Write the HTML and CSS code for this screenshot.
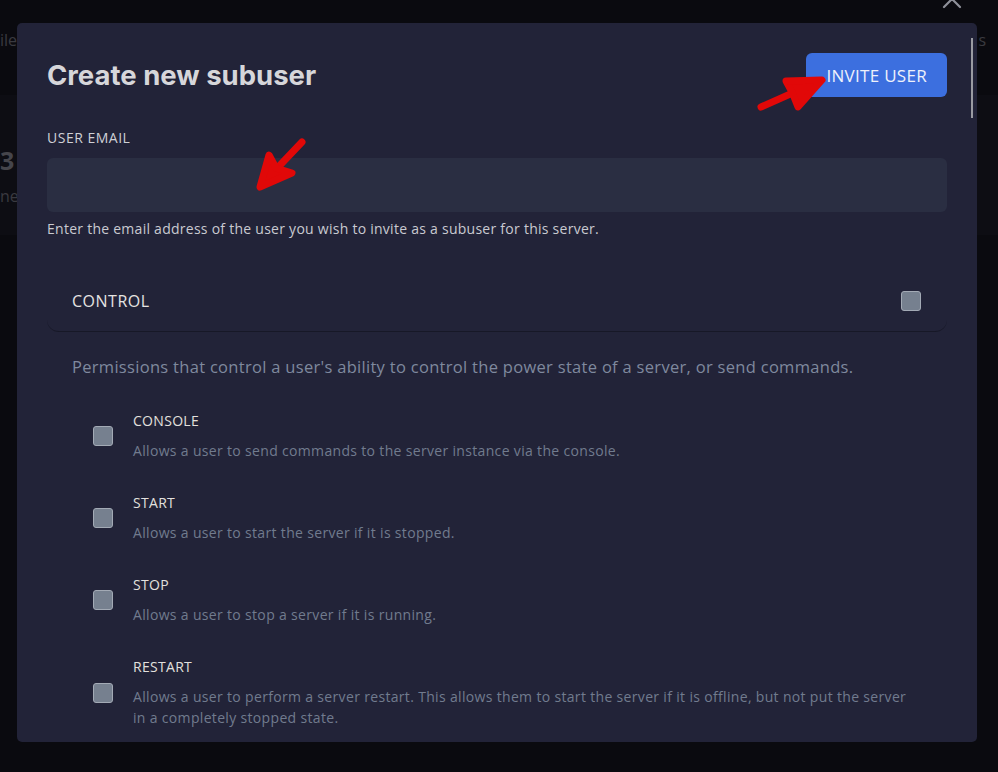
FILE: index.html
```html
<html>
  <head>
    <title>Create new subuser</title>
    <link rel="stylesheet" href="styles.css">
  </head>
  <body>
  <div class="page">
    <div class="page_top">
      <span>ile</span>
      <span>s</span>
    </div>
    <div class="page_card">
      <div class="page_big">3</div>
      <div class="page_small">ne</div>
    </div>
  </div>

  <div class="close_x">
    <svg width="22" height="22" viewBox="0 0 22 22"><path d="M3 3 L19 19 M19 3 L3 19" stroke="#8e9099" stroke-width="2.2" stroke-linecap="round" fill="none"/></svg>
  </div>

  <div class="modal">
    <div class="modal_inner">
      <div class="modal_head">
        <h2 class="title">Create new subuser</h2>
        <button class="invite_btn">INVITE USER</button>
      </div>

      <label class="field_label">USER EMAIL</label>
      <input type="text" class="field_input"/>
      <p class="field_help">Enter the email address of the user you wish to invite as a subuser for this server.</p>

      <div class="perm_group">
        <div class="perm_head">
          <span>CONTROL</span>
          <span class="check"></span>
        </div>
        <p class="perm_desc">Permissions that control a user's ability to control the power state of a server, or send commands.</p>

        <div class="perm_list">
          <div class="perm_item">
            <span class="check"></span>
            <div class="perm_text">
              <div class="perm_name">CONSOLE</div>
              <div class="perm_info">Allows a user to send commands to the server instance via the console.</div>
            </div>
          </div>
          <div class="perm_item">
            <span class="check"></span>
            <div class="perm_text">
              <div class="perm_name">START</div>
              <div class="perm_info">Allows a user to start the server if it is stopped.</div>
            </div>
          </div>
          <div class="perm_item">
            <span class="check"></span>
            <div class="perm_text">
              <div class="perm_name">STOP</div>
              <div class="perm_info">Allows a user to stop a server if it is running.</div>
            </div>
          </div>
          <div class="perm_item">
            <span class="check"></span>
            <div class="perm_text">
              <div class="perm_name">RESTART</div>
              <div class="perm_info">Allows a user to perform a server restart. This allows them to start the server if it is offline, but not put the server in a completely stopped state.</div>
            </div>
          </div>
        </div>
      </div>
    </div>
    <div class="scroll_thumb"></div>
  </div>

  <!-- red annotation arrows drawn over the screenshot -->
  <svg class="arrows" width="998" height="772" viewBox="0 0 998 772">
    <g stroke="#e10808" stroke-width="7" stroke-linecap="round" stroke-linejoin="round" fill="#e10808">
      <path d="M302 142 L265 181" fill="none"/>
      <path d="M260 187 L269 155 L276 168 L292 173 Z"/>
      <path d="M761 107 L815 83" fill="none"/>
      <path d="M822 80 L786 81 L792 92 L798 107 Z"/>
    </g>
  </svg>
  </body>
</html>
```

FILE: styles.css
```css
*{
    box-sizing: border-box;
}
body{
    margin: 0;
    width: 998px;
    height: 772px;
    overflow: hidden;
    background-color: #0a0a0f;
    font-family: 'Open Sans', 'Noto Sans', sans-serif;
    position: relative;
}
.page{
    color: #3a3a40;
}
.page_top{
    display: flex;
    justify-content: space-between;
    padding: 30px 12px 0 0;
    font-size: 16px;
    line-height: 20px;
    height: 95px;
}
.page_card{
    background-color: #0d0d13;
    height: 140px;
    padding: 50px 0 0 0;
}
.page_big{
    font-size: 25px;
    font-weight: bold;
    line-height: 30px;
    color: #45454b;
}
.page_small{
    font-size: 16px;
    margin-top: 10px;
}
.close_x{
    position: absolute;
    left: 941px;
    top: -12px;
}
.modal{
    position: absolute;
    left: 17px;
    top: 23px;
    width: 960px;
    height: 719px;
    background-color: #222338;
    border-radius: 5px;
    overflow: hidden;
}
.modal_inner{
    padding: 30px 30px 0 30px;
}
.scroll_thumb{
    position: absolute;
    right: 4px;
    top: 15px;
    width: 2px;
    height: 80px;
    background-color: #9a9ba2;
}
.modal_head{
    display: flex;
    justify-content: space-between;
    align-items: center;
    height: 44px;
}
.title{
    margin: 0;
    font-family: 'Inter', sans-serif;
    font-size: 27.5px;
    font-weight: 700;
    color: #d6d6da;
}
.invite_btn{
    height: 44px;
    padding: 0 20px;
    border: none;
    border-radius: 6px;
    background-color: #3c6fdf;
    color: #eef1fb;
    font-family: 'Open Sans', sans-serif;
    font-size: 17px;
    letter-spacing: 0.3px;
}
.field_label{
    display: block;
    margin-top: 31px;
    font-size: 14px;
    line-height: 20px;
    letter-spacing: 0.5px;
    color: #cfd0d6;
}
.field_input{
    display: block;
    width: 100%;
    height: 54px;
    margin-top: 10px;
    border: none;
    border-radius: 6px;
    background-color: #2a2e42;
}
.field_help{
    margin: 7px 0 0 0;
    font-size: 14px;
    line-height: 20px;
    letter-spacing: 0.26px;
    color: #c9cad1;
}
.perm_group{
    margin-top: 31px;
}
.perm_head{
    display: flex;
    justify-content: space-between;
    align-items: center;
    height: 62px;
    padding: 0 26px 0 25px;
    border-bottom: 1px solid #171827;
    border-radius: 0 0 12px 12px;
    font-size: 16px;
    letter-spacing: 0.5px;
    color: #e6e4e2;
}
.check{
    display: block;
    width: 20px;
    height: 20px;
    flex-shrink: 0;
    border: 1px solid #a3aab5;
    border-radius: 3px;
    background-color: #76808f;
}
.perm_desc{
    margin: 23px 0 0 25px;
    font-size: 16.5px;
    line-height: 24px;
    letter-spacing: 0.3px;
    color: #7f899e;
}
.perm_list{
    display: flex;
    flex-direction: column;
    gap: 32px;
    margin-top: 32px;
    padding: 0 37px 0 46px;
}
.perm_item{
    display: flex;
    align-items: center;
    gap: 20px;
}
.perm_name{
    font-size: 14px;
    line-height: 20px;
    letter-spacing: 0.3px;
    color: #e2e0de;
}
.perm_info{
    margin-top: 9px;
    font-size: 14px;
    line-height: 21px;
    letter-spacing: 0.33px;
    color: #717b8e;
}
.arrows{
    position: absolute;
    left: 0;
    top: 0;
    pointer-events: none;
}
```
